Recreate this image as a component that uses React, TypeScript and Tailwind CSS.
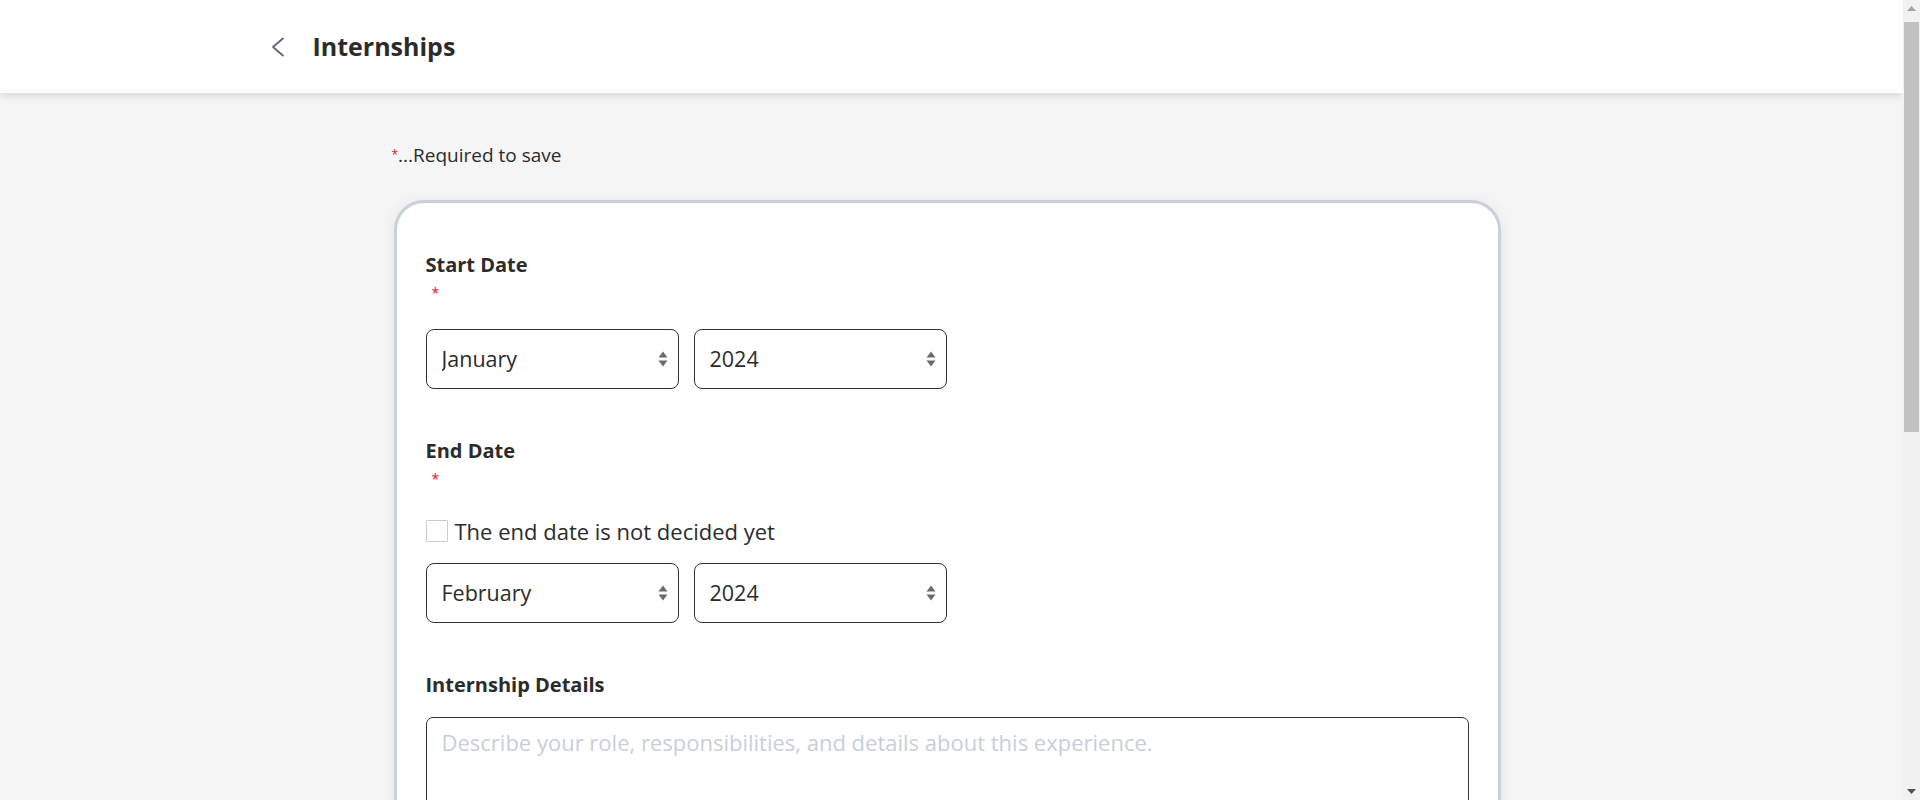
import React from "react";

const months = [
  "January",
  "February",
  "March",
  "April",
  "May",
  "June",
  "July",
  "August",
  "September",
  "October",
  "November",
  "December",
];

const years = ["2026", "2025", "2024", "2023", "2022", "2021", "2020"];

const SortArrows = () => (
  <svg width="10" height="17" viewBox="0 0 10 17" className="pointer-events-none absolute right-[11px] top-1/2 -translate-y-1/2">
    <path d="M5 1 L9.5 7 L0.5 7 Z" fill="#6b6b6b" />
    <path d="M5 16 L9.5 10 L0.5 10 Z" fill="#6b6b6b" />
  </svg>
);

interface SelectProps {
  value: string;
  options: string[];
  onChange: (v: string) => void;
}

const DateSelect: React.FC<SelectProps> = ({ value, options, onChange }) => (
  <div className="relative w-[253px]">
    <select
      value={value}
      onChange={(e) => onChange(e.target.value)}
      className="h-[60px] w-full appearance-none rounded-[8px] border border-[#333333] bg-white pl-[15px] pr-8 text-[21.5px] text-[#2b2b2b] outline-none"
    >
      {options.map((o) => (
        <option key={o} value={o}>
          {o}
        </option>
      ))}
    </select>
    <SortArrows />
  </div>
);

const Label: React.FC<{ text: string; required?: boolean }> = ({ text, required }) => (
  <div>
    <div className="text-[20px] font-bold leading-[28px] text-[#2b2b2b]">{text}</div>
    {required && <div className="pl-[6px] text-[14px] leading-[28px] text-[#e8112d]">*</div>}
  </div>
);

// fake classic scrollbar on the right edge, like the captured browser
const ScrollBar = () => (
  <div className="flex h-full w-[17px] shrink-0 flex-col items-center bg-[#f1f1f1]">
    <div className="flex h-[17px] w-full items-center justify-center">
      <svg width="9" height="5" viewBox="0 0 9 5">
        <path d="M4.5 0 L9 5 L0 5 Z" fill="#a3a3a3" />
      </svg>
    </div>
    <div className="mt-[5px] h-[410px] w-[15px] bg-[#c1c1c1]" />
    <div className="flex-1" />
    <div className="flex h-[17px] w-full items-center justify-center">
      <svg width="9" height="5" viewBox="0 0 9 5">
        <path d="M0 0 L9 0 L4.5 5 Z" fill="#505050" />
      </svg>
    </div>
  </div>
);

export default function App() {
  const [startMonth, setStartMonth] = React.useState("January");
  const [startYear, setStartYear] = React.useState("2024");
  const [endMonth, setEndMonth] = React.useState("February");
  const [endYear, setEndYear] = React.useState("2024");
  const [undecided, setUndecided] = React.useState(false);
  const [details, setDetails] = React.useState("");

  return (
    <div className="flex h-screen overflow-hidden bg-[#f5f5f5] font-['Open_Sans',sans-serif] text-[#2b2b2b]">
      <div className="min-w-0 flex-1 overflow-y-auto [scrollbar-width:none]">
        {/* Header */}
        <header className="h-[93px] bg-white shadow-[0_3px_8px_rgba(0,0,0,0.12)]">
          <div className="mx-auto flex h-full w-[1360px] items-center">
            <button className="-ml-[1px] flex h-[24px] w-[16px] items-center">
              <svg width="14" height="20" viewBox="0 0 14 20" fill="none">
                <path d="M12.5 1 L2 10 L12.5 19" stroke="#5b6579" strokeWidth="1.8" strokeLinejoin="round" />
              </svg>
            </button>
            <h1 className="ml-[26px] text-[25px] font-bold text-[#2b2b2b]">Internships</h1>
          </div>
        </header>

        <main className="mx-auto w-[1120px] pb-[80px] pt-[50px]">
          <p className="text-[19px] leading-[24px] text-[#2b2b2b]">
            <span className="align-top text-[12px] text-[#e8112d]">*</span>...Required to save
          </p>

          <div className="ml-[2px] mt-[33px] w-[1107px] rounded-[30px] border-[3px] border-[#c9cfdc] bg-white px-[29px] pb-[46px] pt-[48px] shadow-[0_2px_14px_rgba(0,0,0,0.08)]">
            {/* Start date */}
            <Label text="Start Date" required />
            <div className="mt-[22px] flex gap-[15px]">
              <DateSelect value={startMonth} options={months} onChange={setStartMonth} />
              <DateSelect value={startYear} options={years} onChange={setStartYear} />
            </div>

            {/* End date */}
            <div className="mt-[48px]">
              <Label text="End Date" required />
            </div>
            <label className="mt-[26px] flex h-[24px] cursor-pointer items-center gap-[7px] text-[22px]">
              <input
                type="checkbox"
                checked={undecided}
                onChange={(e) => setUndecided(e.target.checked)}
                className="h-[22px] w-[22px] appearance-none rounded-[1px] border border-[#c5cbd9] bg-white checked:bg-[#2b2b2b]"
              />
              The end date is not decided yet
            </label>
            <div className="mt-[20px] flex gap-[15px]">
              <DateSelect value={endMonth} options={months} onChange={setEndMonth} />
              <DateSelect value={endYear} options={years} onChange={setEndYear} />
            </div>

            {/* Details */}
            <div className="mt-[48px]">
              <Label text="Internship Details" />
            </div>
            <textarea
              value={details}
              onChange={(e) => setDetails(e.target.value)}
              placeholder="Describe your role, responsibilities, and details about this experience."
              className="mt-[18px] block h-[240px] w-full resize-none rounded-[7px] border border-[#333333] px-[15px] py-[9px] text-[22px] leading-[30px] text-[#2b2b2b] outline-none placeholder:text-[#c8cedb]"
            />

            {/* Company */}
            <div className="mt-[48px]">
              <Label text="Company Name" />
            </div>
            <input
              type="text"
              placeholder="Ex: Acme Corporation"
              className="mt-[18px] block h-[60px] w-full rounded-[7px] border border-[#333333] px-[15px] text-[22px] outline-none placeholder:text-[#c8cedb]"
            />

            {/* Location */}
            <div className="mt-[48px]">
              <Label text="Location" />
            </div>
            <input
              type="text"
              placeholder="Ex: Tokyo, Japan"
              className="mt-[18px] block h-[60px] w-full rounded-[7px] border border-[#333333] px-[15px] text-[22px] outline-none placeholder:text-[#c8cedb]"
            />

            <div className="mt-[48px] flex justify-end gap-4">
              <button className="h-[56px] rounded-full border border-[#333333] px-10 text-[18px] font-bold">Cancel</button>
              <button className="h-[56px] rounded-full bg-[#2b2b2b] px-12 text-[18px] font-bold text-white">Save</button>
            </div>
          </div>
        </main>
      </div>
      <ScrollBar />
    </div>
  );
}
